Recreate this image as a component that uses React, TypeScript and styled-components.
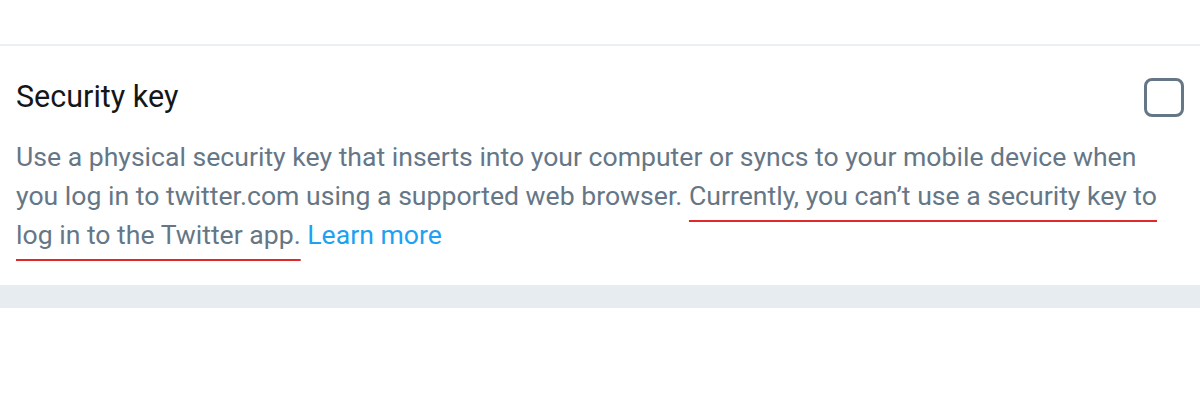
import React from "react";
import styled, { createGlobalStyle } from "styled-components";

const Global = createGlobalStyle`
  html, body {
    margin: 0;
    padding: 0;
    background: #ffffff;
  }
  body {
    font-family: Roboto, "Liberation Sans", Arial, sans-serif;
    -webkit-font-smoothing: antialiased;
  }
`;

const Page = styled.div`
  width: 1200px;
  display: flex;
  flex-direction: column;
`;

const TopSpace = styled.div`
  height: 44px;
  border-bottom: 2px solid #eceff2;
`;

const Section = styled.section`
  padding: 31px 16px 31px 16px;
  display: flex;
  flex-direction: column;
  gap: 20px;
`;

const HeaderRow = styled.div`
  display: flex;
  align-items: center;
  justify-content: space-between;
`;

const Title = styled.h2`
  margin: 0;
  font-size: 30.5px;
  line-height: 40px;
  font-weight: 400;
  color: #14171a;
`;

const Checkbox = styled.div`
  width: 40px;
  height: 39px;
  box-sizing: border-box;
  border: 3px solid #657786;
  border-radius: 8px;
  flex: none;
`;

const Description = styled.p`
  margin: 0;
  max-width: 1160px;
  font-size: 26.6px;
  line-height: 39px;
  color: #657786;
`;

const Marked = styled.span`
  text-decoration: underline;
  text-decoration-color: #e02a2a;
  text-decoration-thickness: 2px;
  text-underline-offset: 15px;
`;

const Link = styled.a`
  color: #1da1f2;
  text-decoration: none;
`;

const Band = styled.div`
  height: 23px;
  background: #e6ecf0;
`;

export default function App() {
  return (
    <Page>
      <Global />
      <TopSpace />
      <Section>
        <HeaderRow>
          <Title>Security key</Title>
          <Checkbox role="checkbox" aria-checked="false" />
        </HeaderRow>
        <Description>
          Use a physical security key that inserts into your computer or syncs to your mobile device when you
          log in to twitter.com using a supported web browser.{" "}
          <Marked>Currently, you can’t use a security key to log in to the Twitter app.</Marked>{" "}
          <Link href="#">Learn more</Link>
        </Description>
      </Section>
      <Band />
    </Page>
  );
}
